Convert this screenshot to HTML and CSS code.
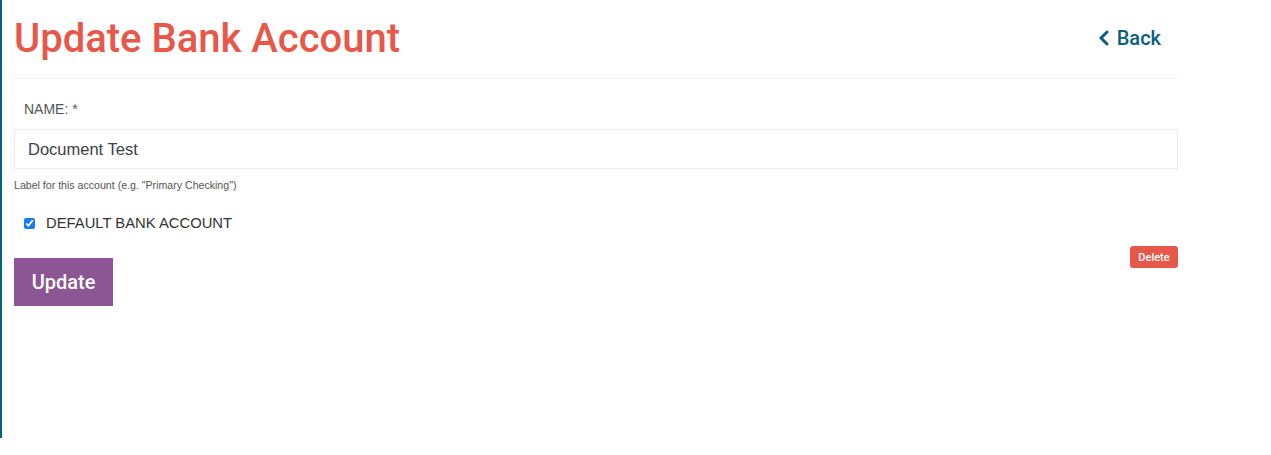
FILE: index.html
```html
<!DOCTYPE html>
<html>
<head>
<meta charset="utf-8">
<link rel="stylesheet" href="styles.css">
</head>
<body>
<div class="page">
  <div class="content">
    <div class="header">
      <h1 class="title">Update Bank Account</h1>
      <a class="back" href="#"><svg class="chev" width="12" height="16" viewBox="0 0 12 16"><path d="M9 2 L3 8 L9 14" fill="none" stroke="currentColor" stroke-width="3" stroke-linecap="round" stroke-linejoin="round"/></svg>Back</a>
    </div>
    <form class="form">
      <label class="label">NAME: *</label>
      <input class="input" type="text" value="Document Test">
      <div class="help">Label for this account (e.g. "Primary Checking")</div>
      <label class="check"><input type="checkbox" checked><span>DEFAULT BANK ACCOUNT</span></label>
      <div class="actions">
        <button class="update" type="button">Update</button>
        <button class="delete" type="button">Delete</button>
      </div>
    </form>
  </div>
</div>
</body>
</html>
```
FILE: styles.css
```css
html, body { margin: 0; padding: 0; background: #fff; }
body { font-family: "Liberation Sans", Arial, sans-serif; }
.page {
  border-left: 2px solid #00657f;
  height: 438px;
  padding-left: 12px;
  box-sizing: border-box;
}
.content { width: 1164px; }
.header {
  display: flex;
  justify-content: space-between;
  align-items: center;
  height: 78px;
  border-bottom: 1px solid #eeeeee;
}
.title {
  margin: 0;
  font-family: Roboto, "Liberation Sans", sans-serif;
  font-size: 40px;
  font-weight: 500;
  color: #e8584a;
  line-height: 78px;
}
.back {
  display: flex;
  align-items: center;
  gap: 7px;
  color: #0a5d7e;
  text-decoration: none;
  font-family: Roboto, "Liberation Sans", sans-serif;
  font-size: 20px;
  font-weight: 500;
  margin-right: 17px;
  margin-top: -2px;
}
.chev { display: block; }
.form { display: flex; flex-direction: column; }
.label {
  font-size: 14px;
  color: #555;
  margin: 21px 0 0 10px;
  line-height: 18px;
  font-weight: 300;
}
.input {
  margin-top: 11px;
  height: 40px;
  box-sizing: border-box;
  border: 1px solid #ececec;
  padding: 0 13px;
  font-family: "Liberation Sans", Arial, sans-serif;
  font-size: 16.5px;
  color: #3d4148;
  outline: none;
}
.help {
  font-size: 10.6px;
  color: #555;
  margin-top: 10px;
  line-height: 12px;
}
.check {
  display: flex;
  align-items: center;
  margin: 24px 0 0 10px;
  font-size: 14.8px;
  color: #333;
  line-height: 16px;
}
.check input { width: 11px; height: 11px; margin: 0 11px 0 0; accent-color: #1a7cf5; }
.actions {
  display: flex;
  justify-content: space-between;
  align-items: flex-start;
  margin-top: 15px;
}
.update {
  margin-top: 12px;
  width: 99px;
  height: 48px;
  border: none;
  background: #8c5593;
  color: #fff;
  font-family: Roboto, "Liberation Sans", sans-serif;
  font-size: 20px;
  font-weight: 500;
  padding: 0;
  cursor: pointer;
}
.delete {
  width: 48px;
  height: 22px;
  border: none;
  border-radius: 3px;
  background: #e5584a;
  color: #fff;
  font-family: Roboto, "Liberation Sans", sans-serif;
  font-size: 11px;
  font-weight: 500;
  padding: 0;
}
```
